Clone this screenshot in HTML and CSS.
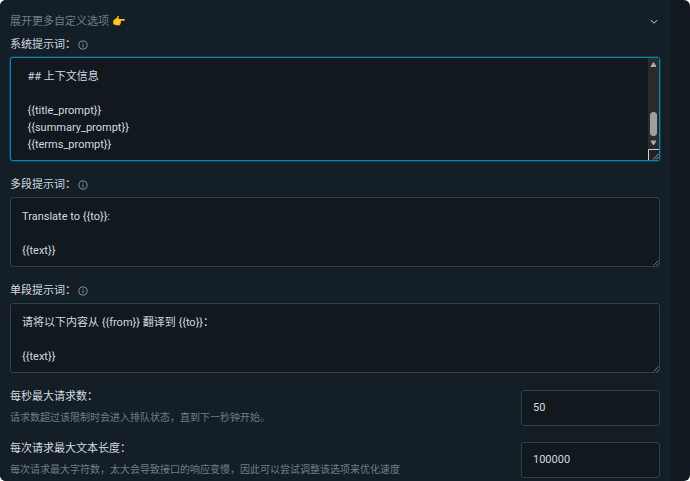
FILE: index.html
```html
<!DOCTYPE html>
<html lang="zh-CN">
<head>
    <meta charset="UTF-8">
    <meta name="viewport" content="width=device-width, initial-scale=1.0">
    <title>自定义选项</title>
    <link rel="stylesheet" href="styles.css">
</head>
<body>
    <div class="window">
        <main class="panel">
            <button type="button" class="expand" aria-expanded="true">
                <span>展开更多自定义选项 👉</span>
                <svg class="chevron" viewBox="0 0 10 10" aria-hidden="true"><path d="M1.8 3 5 6.3 8.2 3"/></svg>
            </button>

            <div class="field">
                <div class="field-title">
                    <label for="system-prompt">系统提示词：</label>
                    <svg class="info" viewBox="0 0 10 10" aria-hidden="true"><circle cx="5" cy="5" r="4.1"/><path d="M5 4.4v3M5 2.6v1"/></svg>
                </div>
                <div class="box focused">
                    <textarea id="system-prompt" rows="5" spellcheck="false">  ## 上下文信息

  {{title_prompt}}
  {{summary_prompt}}
  {{terms_prompt}}</textarea>
                    <div class="scrollbar">
                        <svg class="arrow" viewBox="0 0 11 13" aria-hidden="true"><path d="M5.5 4.5 8 8.5H3z"/></svg>
                        <div class="thumb"></div>
                        <svg class="arrow" viewBox="0 0 11 13" aria-hidden="true"><path d="M5.5 9 8 5H3z"/></svg>
                        <svg class="corner" viewBox="0 0 11 11" aria-hidden="true"><path class="frame" d="M.5 11V.5H11"/><path d="M5 10.5 10.5 5M8 10.5 10.5 8"/></svg>
                    </div>
                </div>
            </div>

            <div class="field">
                <div class="field-title">
                    <label for="multi-prompt">多段提示词：</label>
                    <svg class="info" viewBox="0 0 10 10" aria-hidden="true"><circle cx="5" cy="5" r="4.1"/><path d="M5 4.4v3M5 2.6v1"/></svg>
                </div>
                <div class="box">
                    <textarea id="multi-prompt" rows="3" spellcheck="false">Translate to {{to}}:

{{text}}</textarea>
                    <svg class="grip" viewBox="0 0 6 6" aria-hidden="true"><path d="M.5 5.5l5-5M3.5 5.5l2-2"/></svg>
                </div>
            </div>

            <div class="field">
                <div class="field-title">
                    <label for="single-prompt">单段提示词：</label>
                    <svg class="info" viewBox="0 0 10 10" aria-hidden="true"><circle cx="5" cy="5" r="4.1"/><path d="M5 4.4v3M5 2.6v1"/></svg>
                </div>
                <div class="box">
                    <textarea id="single-prompt" rows="3" spellcheck="false">请将以下内容从 {{from}} 翻译到 {{to}}：

{{text}}</textarea>
                    <svg class="grip" viewBox="0 0 6 6" aria-hidden="true"><path d="M.5 5.5l5-5M3.5 5.5l2-2"/></svg>
                </div>
            </div>

            <div class="row">
                <div class="row-text">
                    <label for="max-requests">每秒最大请求数：</label>
                    <p>请求数超过该限制时会进入排队状态，直到下一秒钟开始。</p>
                </div>
                <input type="text" id="max-requests" inputmode="numeric" value="50">
            </div>

            <div class="row">
                <div class="row-text">
                    <label for="max-length">每次请求最大文本长度：</label>
                    <p>每次请求最大字符数，太大会导致接口的响应变慢，因此可以尝试调整该选项来优化速度</p>
                </div>
                <input type="text" id="max-length" inputmode="numeric" value="100000">
            </div>
        </main>
    </div>
</body>
</html>
```

FILE: styles.css
```css
* {
    box-sizing: border-box;
}
body {
    margin: 0;
    background: #fff;
    color: #d3dae0;
    font-family: Roboto, "Noto Sans CJK SC", sans-serif;
    font-size: 11px;
    line-height: 18px;
}
.window {
    min-height: 100vh;
    padding-right: 19px;
    background: #11181f;
    border-radius: 6px;
    overflow: hidden;
}
.panel {
    min-height: 100vh;
    padding: 13px 11px 0 10px;
    background: #141e26;
}
.expand {
    display: flex;
    align-items: center;
    justify-content: space-between;
    width: 100%;
    margin: 0 0 5px;
    padding: 0;
    border: 0;
    background: none;
    color: #6f7d89;
    font: inherit;
    cursor: pointer;
}
.chevron {
    width: 10px;
    height: 10px;
    margin-right: 1px;
    fill: none;
    stroke: #c5cdd3;
}
.field {
    margin-bottom: 15px;
}
.field-title {
    display: flex;
    align-items: center;
    gap: 2px;
    margin-bottom: 3px;
}
.info {
    width: 10px;
    height: 10px;
    fill: none;
    stroke: #a3acb3;
    stroke-width: 0.8;
}
.box {
    display: flex;
    position: relative;
    border: 1px solid #2f404b;
    border-radius: 3px;
    background: #11181e;
}
.box.focused {
    border-color: #0a86ae;
    box-shadow: 0 0 0 1px #123f52;
}
textarea {
    display: block;
    flex: 1;
    min-width: 0;
    padding: 10px 11px 7px;
    border: 0;
    outline: 0;
    background: none;
    color: inherit;
    font: inherit;
    line-height: 17px;
    resize: none;
    overflow: hidden;
}
.grip {
    position: absolute;
    right: 0;
    bottom: 0;
    width: 6px;
    height: 6px;
    fill: none;
    stroke: #8b9296;
    stroke-width: 0.8;
}
.scrollbar {
    display: flex;
    flex-direction: column;
    width: 11px;
    background: #2b2b2b;
}
.arrow {
    width: 11px;
    height: 13px;
    fill: #a8a8a8;
    stroke: #a8a8a8;
    stroke-linejoin: round;
}
.thumb {
    width: 7px;
    height: 24px;
    margin: auto auto 0;
    border-radius: 4px;
    background: #9f9f9f;
}
.corner {
    width: 11px;
    height: 11px;
    background: #202326;
    fill: none;
    stroke: #999;
}
.corner .frame {
    stroke: #d0d0d0;
}
.row {
    display: flex;
    align-items: center;
    justify-content: space-between;
    gap: 16px;
    margin-top: 13px;
}
.row-text label {
    display: block;
}
.row-text p {
    margin: 3px 0 0;
    color: #6f7d89;
    font-size: 10px;
}
input {
    flex: none;
    width: 139px;
    height: 36px;
    padding: 0 11px;
    border: 1px solid #2f404b;
    border-radius: 3px;
    outline: 0;
    background: #11181e;
    color: inherit;
    font: inherit;
}
```
